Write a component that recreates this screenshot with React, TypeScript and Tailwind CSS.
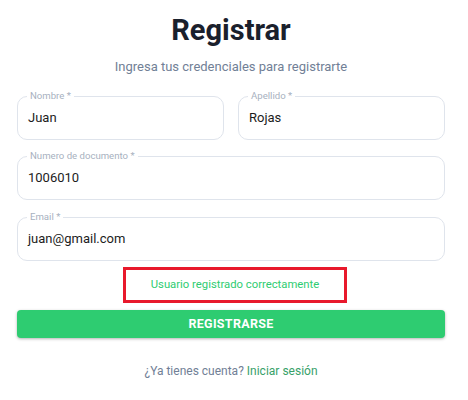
import React from 'react';

interface FieldProps {
  label: string;
  value: string;
  className?: string;
}

function OutlinedField({ label, value, className = '' }: FieldProps) {
  return (
    <div className={`relative h-[44px] rounded-[10px] border border-[#dfe4ec] ${className}`}>
      <span className="absolute -top-[7px] left-[9px] bg-white px-[3px] text-[9.6px] leading-[12px] text-[#a7b1c0]">
        {label} *
      </span>
      <div className="flex h-full items-center pl-[10px] text-[13px] text-[#1c1c1c]">{value}</div>
    </div>
  );
}

export default function App() {
  return (
    <div className="h-[400px] w-[468px] bg-white font-['Roboto',sans-serif]">
      <div className="ml-[17px] w-[428px] pt-[13px]">
        <h1 className="text-center text-[29px] font-bold leading-[34px] text-[#1a202c]">Registrar</h1>
        <p className="mt-[12px] text-center text-[13px] leading-[16px] text-[#718096]">
          Ingresa tus credenciales para registrarte
        </p>

        <div className="mt-[21px] grid grid-cols-2 gap-[14px]">
          <OutlinedField label="Nombre" value="Juan" />
          <OutlinedField label="Apellido" value="Rojas" />
        </div>
        <OutlinedField className="mt-[16px]" label="Numero de documento" value="1006010" />
        <OutlinedField className="mt-[17px]" label="Email" value="juan@gmail.com" />

        <div className="mt-[6px] flex justify-center pl-[8px]">
          <div className="flex h-[36px] w-[224px] items-center justify-center border-[3px] border-[#e8192c] text-[11.3px] text-[#2ecc71]">
            Usuario registrado correctamente
          </div>
        </div>

        <button className="mt-[7px] h-[28px] w-full rounded-[4px] bg-[#2ecc71] text-[12.5px] font-bold tracking-[0.3px] text-white shadow-[0_1px_3px_rgba(0,0,0,0.3)]">
          REGISTRARSE
        </button>

        <p className="mt-[24px] text-center text-[12px] text-[#718096]">
          ¿Ya tienes cuenta? <span className="text-[#38a169]">Iniciar sesión</span>
        </p>
      </div>
    </div>
  );
}
